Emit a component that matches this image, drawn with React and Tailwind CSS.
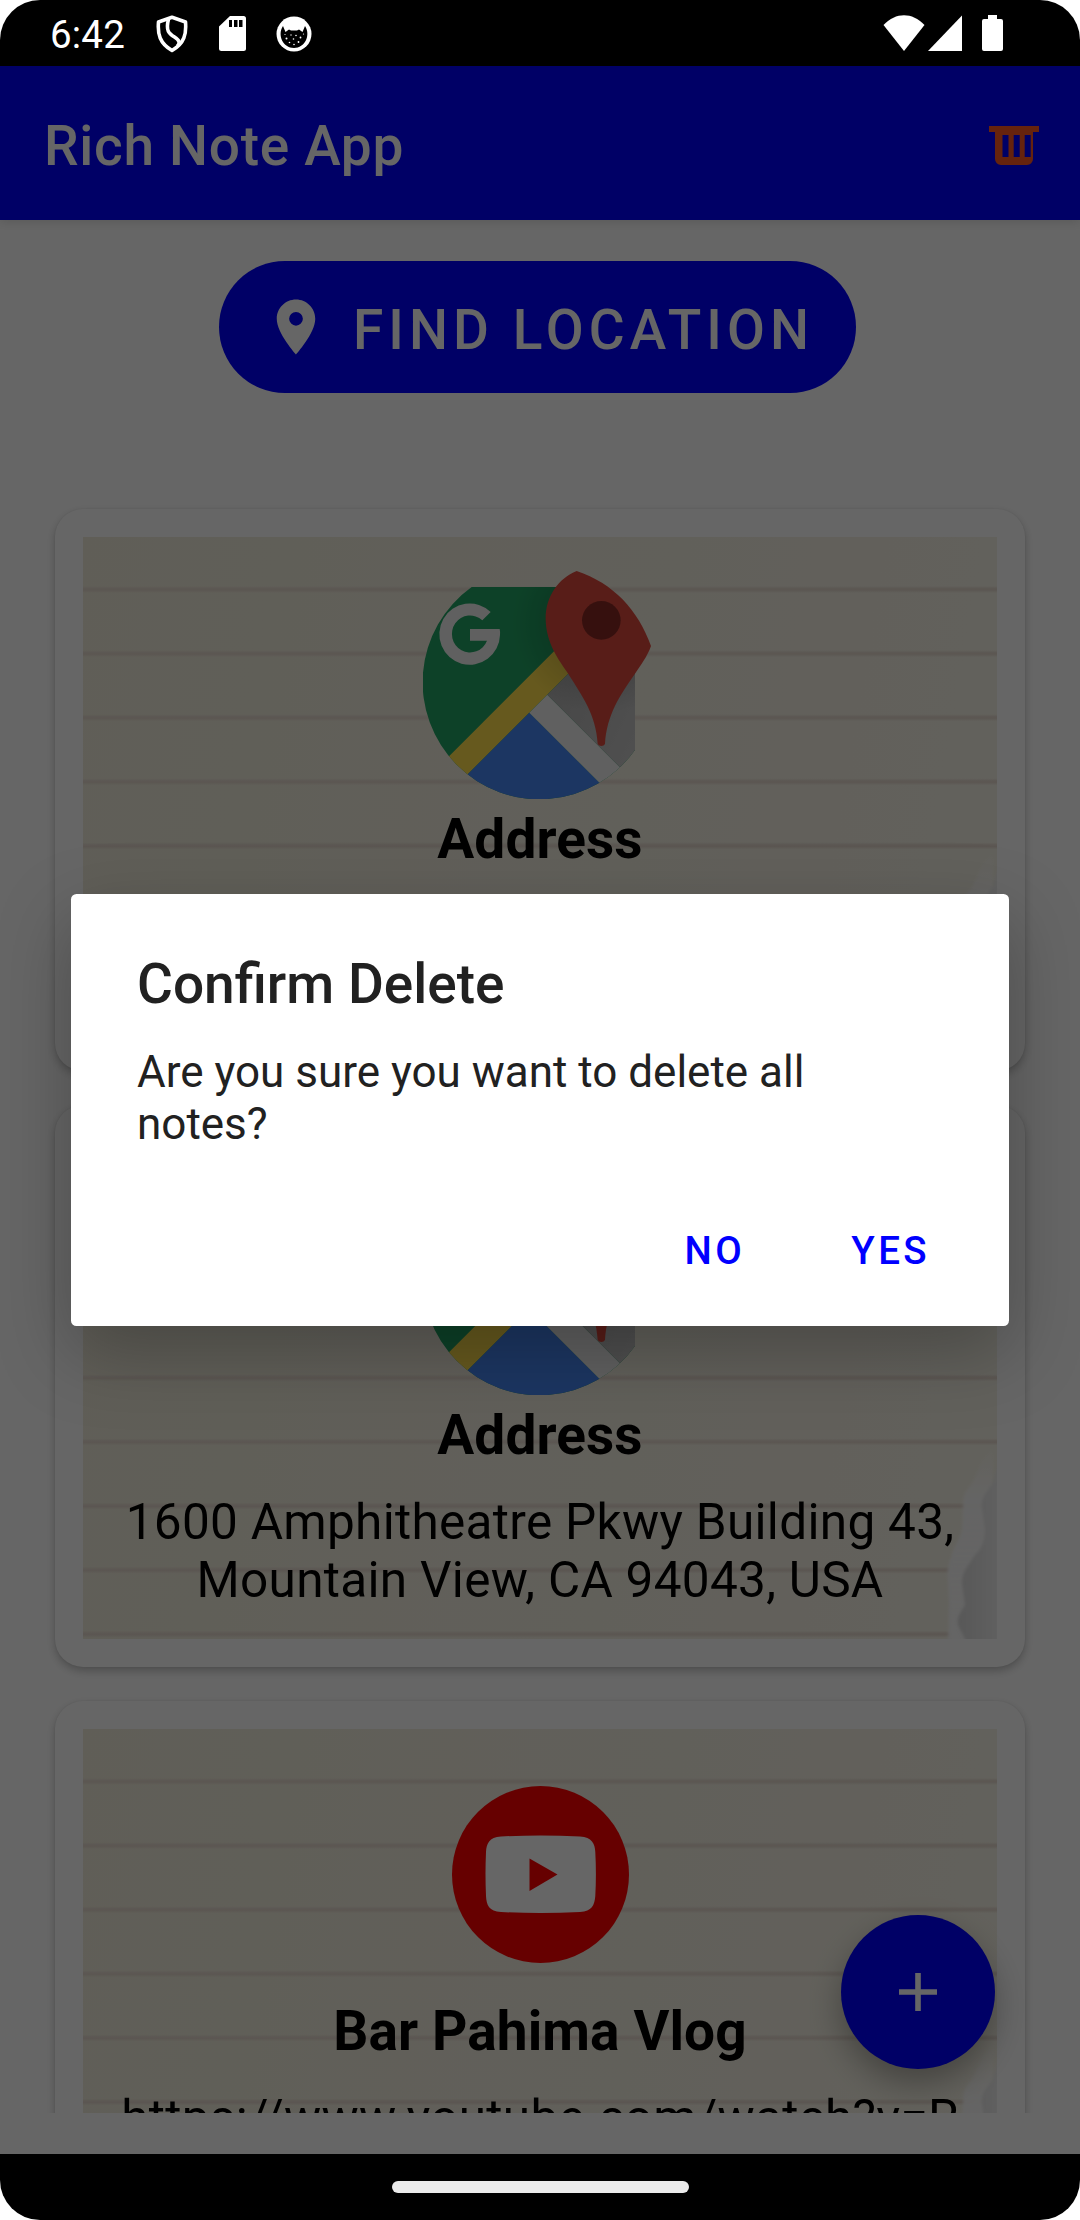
import React from "react";

function ShieldIcon() {
  return (
    <svg className="h-[38px] w-[32px]" viewBox="0 0 32 38" fill="none" stroke="#fff" strokeWidth="3.6" strokeLinejoin="round">
      <path d="M16 2.3 29.5 7C30.5 19 28.5 28 16 35.5 3.5 28 1.5 19 2.5 7Z" />
      <path d="M12.500 4C9.500 16 13 18.500 18.500 22 24 25.500 24 28 21.500 31" strokeWidth="3.6" />
    </svg>
  );
}

function SdCardIcon() {
  return (
    <svg className="h-[35px] w-[27px]" viewBox="0 0 27 35">
      <path d="M11 0H24.500A2.500 2.500 0 0 1 27 2.500V32.500A2.500 2.500 0 0 1 24.500 35H2.500A2.500 2.500 0 0 1 0 32.500V10.500Z" fill="#fff" />
      <path d="M10 4h3v7h-3zM15 4h3.500v7H15zM20 4h3.500v7H20z" fill="#000" />
    </svg>
  );
}

function CatIcon() {
  return (
    <svg className="h-[36px] w-[36px]" viewBox="0 0 36 36">
      <circle cx="18" cy="18" r="17.500" fill="#fff" />
      <path d="M7 10 9.500 16 13 13.500 15 14.500H21L23 13.500 26.500 16 29 10C35 19 29 32 18 32S1 19 7 10Z" fill="#000" />
      <g fill="#fff">
        <circle cx="10.500" cy="22.500" r="1" /><circle cx="15" cy="19" r=".7" />
        <circle cx="20" cy="19.500" r=".8" /><circle cx="24.500" cy="21.500" r=".9" />
        <circle cx="17.500" cy="23" r=".8" /><circle cx="13.500" cy="26.500" r=".8" />
        <circle cx="18" cy="28.500" r=".8" /><circle cx="22.500" cy="26" r=".9" />
        <circle cx="27.500" cy="18" r=".6" /><circle cx="9" cy="18.500" r=".6" />
      </g>
    </svg>
  );
}

function StatusBar() {
  return (
    <header className="flex h-[66px] shrink-0 items-start justify-between bg-black pl-[50px] pr-[77px] text-white">
      <div className="flex pt-[12px]">
        <span className="w-[106px] text-[38.5px] leading-[45px] tracking-[0.2px]">6:42</span>
        <div className="flex gap-[31px] pt-[3px]">
          <ShieldIcon />
          <div className="pt-px"><SdCardIcon /></div>
          <div className="-ml-px pt-px"><CatIcon /></div>
        </div>
      </div>
      <div className="flex pt-[15px]">
        <svg className="h-[36px] w-[42px]" viewBox="0 0 42 36">
          <path d="M.5 10C13-3 29-3 41.500 10L21 36Z" fill="#fff" />
        </svg>
        <svg className="ml-[3px] h-[36px] w-[34px]" viewBox="0 0 34 36">
          <path d="M34 .5V36H0Z" fill="#fff" />
        </svg>
        <svg className="ml-[20px] h-[36px] w-[21px]" viewBox="0 0 21 36">
          <path d="M6 0H15V4H19A2 2 0 0 1 21 6V34A2 2 0 0 1 19 36H2A2 2 0 0 1 0 34V6A2 2 0 0 1 2 4H6Z" fill="#fff" />
        </svg>
      </div>
    </header>
  );
}

function AppBar() {
  return (
    <div className="z-10 flex h-[154px] shrink-0 items-center justify-between bg-[#0000ff] pl-[44px] pr-[41px] shadow-[0_2px_10px_rgba(0,0,0,0.13)]">
      <h1 className="pt-[6px] text-[55px] font-medium leading-[64px] tracking-[0.69px] text-white">Rich Note App</h1>
      <svg className="mt-[5px] h-[39px] w-[50px]" viewBox="0 0 50 39">
        <path fillRule="evenodd" d="M0 0H50V6H44V33A6 6 0 0 1 38 39H12A6 6 0 0 1 6 33V6H0ZM13.500 9v22h6V9ZM24.700 9v22h6V9ZM35.700 9v22h6V9Z" fill="#ff5722" />
      </svg>
    </div>
  );
}

function MapsLogo() {
  return (
    <svg className="ml-[-6px] h-[228px] w-[228px]" viewBox="69 63 684 684">
      <defs>
        <clipPath id="disc"><path d="M215 111H520L705 330V600A351 351 0 1 1 215 111Z" /></clipPath>
        <linearGradient id="fold" x1="0" y1="0" x2="1" y2="1">
          <stop offset="0" stopColor="#a6a6a6" /><stop offset=".4" stopColor="#b8b8b8" /><stop offset="1" stopColor="#cfcfcf" />
        </linearGradient>
        <radialGradient id="shade" cx="604" cy="220" r="270" gradientUnits="userSpaceOnUse">
          <stop offset=".45" stopColor="#000" stopOpacity=".16" /><stop offset="1" stopColor="#000" stopOpacity="0" />
        </radialGradient>
      </defs>
      <g clipPath="url(#disc)">
        <rect x="60" y="100" width="660" height="660" fill="#22a464" />
        <path d="M56 710 666 100H776L60 816Z" fill="#ffdf4c" />
        <path d="M388 488 720 820H56Z" fill="#4788f4" />
        <path d="M388 488 442 434 760 752 720 820Z" fill="#f1f1f1" />
        <path d="M442 434 776 100V768Z" fill="url(#fold)" />
        <rect x="60" y="100" width="660" height="660" fill="url(#shade)" />
      </g>
      <path d="M530 63C640 100 715 180 753 288 742 320 722 345 705 371 660 435 620 495 615 582A12 10 0 0 1 593 582C588 495 548 440 505 372 478 332 437 280 437 205 437 140 475 85 530 63Z" fill="#dc4a3e" />
      <circle cx="604" cy="211" r="58" fill="#882a24" />
      <path d="M210 237H299Q301 246 300 255A91 92 0 1 1 272 186L247 211A54.500 55.500 0 1 0 261 272H210Z" fill="#f1f1f1" />
    </svg>
  );
}

function VideoLogo() {
  return (
    <svg className="mt-[23px] h-[177px] w-[177px]" viewBox="0 0 177 177">
      <circle cx="88.500" cy="88.500" r="88.500" fill="#ff0000" />
      <path d="M49 50.500Q88.500 48.500 128 50.500C140 51 143 58 143.300 66Q144.500 88 143.300 110C142.500 119 140 125.500 128 126Q88.500 128 49 126C37 125.500 34.500 119 34 110Q33 88 34 66C34.500 58 37 51 49 50.500Z" fill="#fff" />
      <path d="M77.500 72.500 105.500 88.500 77.500 105Z" fill="#ff0000" />
    </svg>
  );
}

function TornCorner() {
  return (
    <svg className="absolute bottom-0 right-0 h-[200px] w-[64px]" viewBox="0 0 64 200">
      <defs>
        <filter id="soft" x="-20%" y="-10%" width="140%" height="120%"><feGaussianBlur stdDeviation="1.800" /></filter>
        <linearGradient id="under" x1="0" y1="0" x2="1" y2="0">
          <stop offset="0" stopColor="#dcdcdc" /><stop offset=".5" stopColor="#e6e6e6" /><stop offset="1" stopColor="#f2f2f2" />
        </linearGradient>
        <linearGradient id="edge" x1="0" y1="0" x2="0" y2="1">
          <stop offset="0" stopColor="#fcfcfc" stopOpacity="0" /><stop offset=".28" stopColor="#fcfcfc" stopOpacity=".9" /><stop offset="1" stopColor="#fcfcfc" />
        </linearGradient>
      </defs>
      <g filter="url(#soft)">
        <path d="M60 6 49 22C44 32 42 42 36 48 31 54 30 58 30 66L29 88C29 98 20 108 18 118 12 130 16 150 16 165L15 206H60V6Z" fill="url(#edge)" />
      </g>
      <g filter="url(#soft)">
        <path d="M66 24 60 44C52 55 48 60 49 68L52 90C52 104 48 110 42 116 36 126 29 132 29 144L32 166C26 176 22 182 27 190L35 206H70V24Z" fill="url(#under)" />
      </g>
    </svg>
  );
}

function NoteCard({ logo, title, children }) {
  return (
    <article className="h-[562px] shrink-0 rounded-[28px] bg-white p-[28px] shadow-[0_4px_9px_rgba(0,0,0,0.24),0_0_2px_rgba(0,0,0,0.08)]">
      <div className="relative h-[506px] overflow-hidden bg-[linear-gradient(100deg,#f0ecda,#f3efe2_60%,#f6f3e6)]">
        <div className="absolute inset-0 bg-[repeating-linear-gradient(180deg,transparent_0px,transparent_49px,#e6dbd0_51.500px,#e4d8cd_53px,transparent_56px,transparent_64.1px)]" />
        <TornCorner />
        <div className="relative flex flex-col items-center text-black">
          <div className="flex h-[270px] items-start pt-[34px]">{logo}</div>
          <h2 className="text-[55px] font-bold leading-[64px] tracking-[0.1px]">{title}</h2>
          <p className="mt-[26px] whitespace-nowrap text-center text-[49.5px] leading-[58px] tracking-[0.3px]">{children}</p>
        </div>
      </div>
    </article>
  );
}

function ConfirmDialog() {
  return (
    <div className="absolute inset-x-0 bottom-[66px] top-[66px] z-20 flex items-center justify-center bg-black/60">
      <section role="dialog" className="flex h-[432px] w-[938px] flex-col rounded-[5.5px] bg-white px-[66px] text-[#212121] shadow-[0_26px_75px_rgba(0,0,0,0.26)]">
        <h2 className="mt-[58px] text-[55px] font-medium leading-[64px]">Confirm Delete</h2>
        <p className="mt-[30px] text-[44px] leading-[52px]">Are you sure you want to delete all<br />notes?</p>
        <div className="mt-[78px] flex justify-end pr-[13px] text-[38.5px] font-medium leading-[46px] tracking-[3.4px] text-[#0000ff]">
          <button>NO</button>
          <button className="ml-[106px]">YES</button>
        </div>
      </section>
    </div>
  );
}

export default function App() {
  return (
    <div className="h-[2220px] w-[1080px] overflow-hidden bg-white font-[Roboto,sans-serif]">
      <div className="relative flex h-full flex-col overflow-hidden rounded-[40px] bg-white">
        <StatusBar />
        <AppBar />
        <main className="relative flex h-[1934px] shrink-0 flex-col">
          <button className="ml-[219px] mt-[41px] flex h-[132px] w-[637px] shrink-0 items-center rounded-full bg-[#0000ff] pl-[44px] text-white">
            <svg className="h-[66px] w-[66px]" viewBox="0 0 24 24" fill="#fff">
              <path d="M12 2C8.130 2 5 5.130 5 9c0 5.250 7 13 7 13s7-7.750 7-13c0-3.870-3.130-7-7-7zm0 9.500a2.500 2.500 0 1 1 0-5 2.500 2.500 0 0 1 0 5z" />
            </svg>
            <span className="ml-[24px] whitespace-nowrap pt-[6px] text-[55px] font-medium leading-[64px] tracking-[5.05px]">FIND LOCATION</span>
          </button>
          <div className="mt-[76px] flex h-[1644px] shrink-0 flex-col gap-[34px] overflow-hidden px-[55px] pt-[40px]">
            <NoteCard logo={<MapsLogo />} title="Address">1600 Amphitheatre Pkwy Building 43,<br />Mountain View, CA 94043, USA</NoteCard>
            <NoteCard logo={<MapsLogo />} title="Address">1600 Amphitheatre Pkwy Building 43,<br />Mountain View, CA 94043, USA</NoteCard>
            <NoteCard logo={<VideoLogo />} title="Bar Pahima Vlog">https://www.youtube.com/watch?v=R</NoteCard>
          </div>
          <button className="absolute bottom-[85px] right-[85px] flex size-[154px] items-center justify-center rounded-full bg-[#0000ff] shadow-[0_14px_32px_rgba(0,0,0,0.3)]">
            <svg className="size-[38px]" viewBox="0 0 38 38" fill="#fff"><path d="M16.200 0h5.600v16.200H38v5.600H21.800V38h-5.600V21.800H0v-5.600h16.200z" /></svg>
          </button>
        </main>
        <footer className="flex h-[66px] shrink-0 items-start justify-center bg-black pt-[27px]">
          <div className="h-[12px] w-[297px] rounded-full bg-[#ebebeb]" />
        </footer>
        <ConfirmDialog />
      </div>
    </div>
  );
}
